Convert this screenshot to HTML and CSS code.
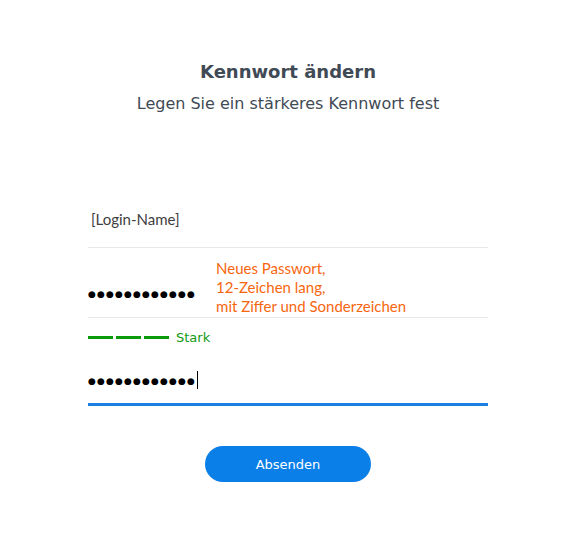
FILE: index.html
```html
<!DOCTYPE html>
<html lang="de">
<head>
<meta charset="utf-8">
<link rel="stylesheet" href="styles.css">
</head>
<body>
<main class="page">
  <h1 class="title">Kennwort ändern</h1>
  <p class="subtitle">Legen Sie ein stärkeres Kennwort fest</p>
  <form class="form">
    <div class="field field-login">
      <span class="login">[Login-Name]</span>
    </div>
    <div class="field field-new">
      <span class="dots">●●●●●●●●●●●●</span>
      <span class="note">Neues Passwort,<br>12-Zeichen lang,<br>mit Ziffer und Sonderzeichen</span>
    </div>
    <div class="strength">
      <span class="bar"></span><span class="bar"></span><span class="bar"></span>
      <span class="strength-label">Stark</span>
    </div>
    <div class="field field-confirm">
      <span class="dots">●●●●●●●●●●●●</span><span class="caret"></span>
    </div>
    <div class="actions">
      <button type="button" class="submit">Absenden</button>
    </div>
  </form>
</main>
</body>
</html>
```

FILE: styles.css
```css
html, body {
  margin: 0;
  padding: 0;
  background: #ffffff;
}
.page {
  width: 400px;
  margin: 0 0 0 88px;
  padding-top: 58px;
  font-family: "DejaVu Sans", Verdana, sans-serif;
  color: #3f4a55;
}
.title {
  margin: 0;
  text-align: center;
  font-size: 18px;
  font-weight: bold;
  line-height: 28px;
}
.subtitle {
  margin: 6px 0 0;
  text-align: center;
  font-size: 16px;
  line-height: 24px;
}
.form {
  margin-top: 80px;
}
.field {
  display: flex;
  border-bottom: 1px solid #e8e8e8;
}
.field-login {
  box-sizing: border-box;
  align-items: flex-start;
  padding-top: 14px;
  height: 52px;
}
.login {
  font-family: Lato, "Liberation Sans", sans-serif;
  font-size: 15px;
  line-height: 18px;
  color: #404040;
  padding-left: 3px;
}
.field-new {
  height: 69px;
  align-items: flex-end;
}
.dots {
  font-family: "DejaVu Sans", sans-serif;
  font-size: 9px;
  letter-spacing: 1.15px;
  color: #000;
  line-height: 10px;
}
.field-new .dots {
  margin-bottom: 18px;
}
.note {
  margin-left: 20px;
  margin-bottom: 1px;
  font-family: Lato, "Liberation Sans", sans-serif;
  font-size: 15px;
  line-height: 19px;
  color: #f7660f;
}
.strength {
  display: flex;
  align-items: center;
  height: 38px;
  gap: 3px;
}
.bar {
  width: 25px;
  height: 3px;
  background: #0a9a0a;
}
.strength-label {
  margin-left: 4px;
  font-size: 13px;
  color: #129a12;
}
.field-confirm {
  height: 47px;
  align-items: center;
  border-bottom: 3px solid #1a7fe0;
}
.field-confirm .dots {
  margin-top: 2px;
}
.caret {
  display: inline-block;
  width: 1px;
  height: 18px;
  background: #000;
  margin-left: 1px;
}
.actions {
  display: flex;
  justify-content: center;
  margin-top: 40px;
}
.submit {
  width: 166px;
  height: 36px;
  border: none;
  border-radius: 18px;
  background: #0a7fe8;
  color: #ffffff;
  font-family: "DejaVu Sans", Verdana, sans-serif;
  font-size: 13px;
}
```
